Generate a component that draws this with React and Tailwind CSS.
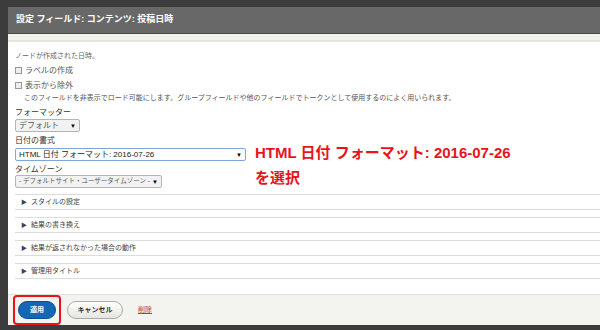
const jp = "font-['Liberation_Sans','Noto_Sans_CJK_JP',sans-serif]";

const sections = ["スタイルの設定", "結果の書き換え", "結果が返されなかった場合の動作", "管理用タイトル"];

function Select({ label, width, size = "text-[8px]", highlight }) {
  return (
    <div
      className={`flex h-[13px] items-center justify-between whitespace-nowrap rounded-[2px] border px-[3px] ${size} ${width} ${
        highlight ? "border-[#7fa6d9] bg-white text-[#222]" : "border-[#b5b5b5] bg-[#f2f2f2] text-[#555]"
      }`}
    >
      <span className="leading-none">{label}</span>
      <span className="text-[6px] leading-none text-black">▼</span>
    </div>
  );
}

function Checkbox({ label }) {
  return (
    <div className="flex items-center gap-[3px] text-[8px] leading-[11px] text-[#555]">
      <span className="h-[7px] w-[7px] border border-[#999] bg-[#eee]" />
      <span>{label}</span>
    </div>
  );
}

export default function App() {
  return (
    <div className={`h-[330px] w-[600px] overflow-hidden bg-[#3c3c3c] pl-[8px] pt-[7px] ${jp}`}>
      <div className="flex h-[318px] w-[600px] flex-col bg-white">
        <div className="flex h-[27px] items-center border-b border-[#4a4a4a] bg-[#686868] pl-[8px] text-[9px] font-bold text-white">
          設定 フィールド: コンテンツ: 投稿日時
        </div>
        <div className="h-[8px] border-b-2 border-[#e6e6e0] bg-[#f2f2ec]" />
        <div className="flex flex-1 flex-col pl-[7px]">
          <div className="mt-[8px] text-[7px] leading-[11px] text-[#666]">ノードが作成された日時。</div>
          <div className="mt-[4px]">
            <Checkbox label="ラベルの作成" />
          </div>
          <div className="mt-[4px]">
            <Checkbox label="表示から除外" />
          </div>
          <div className="mt-[1px] pl-[9px] text-[7px] leading-[11px] text-[#555]">
            このフィールドを非表示でロード可能にします。グループフィールドや他のフィールドでトークンとして使用するのによく用いられます。
          </div>
          <div className="mt-[4px] text-[8px] leading-[11px] text-[#333]">フォーマッター</div>
          <div className="mt-[1px]">
            <Select label="デフォルト" width="w-[65px]" />
          </div>
          <div className="mt-[3px] text-[8px] leading-[11px] text-[#333]">日付の書式</div>
          <div className="relative mt-[2px]">
            <Select label="HTML 日付 フォーマット: 2016-07-26" width="w-[231px]" highlight />
            <div className="absolute left-[240px] top-[-8px] whitespace-nowrap text-[15px] font-bold leading-[25px] text-[#e8141c]">
              HTML 日付 フォーマット: 2016-07-26
              <br />
              を選択
            </div>
          </div>
          <div className="mt-[3px] text-[8px] leading-[11px] text-[#333]">タイムゾーン</div>
          <div>
            <Select label="- デフォルトサイト・ユーザータイムゾーン -" width="w-[147px]" size="text-[6.5px]" />
          </div>
          <div className="mt-[6px] flex flex-col gap-[7px]">
            {sections.map((s) => (
              <div
                key={s}
                className="flex h-[16px] items-center gap-[4px] border-y border-[#dcdcdc] pl-[6px] text-[7px] text-[#444]"
              >
                <span className="text-[6px]">▶</span>
                <span>{s}</span>
              </div>
            ))}
          </div>
        </div>
        <div className="flex h-[31px] items-center gap-[6px] border-t border-[#e0e0da] bg-[#f3f3ef] pl-[5px]">
          <div className="flex h-[30px] w-[48px] items-center justify-center rounded-[4px] border-2 border-[#e8141c]">
            <div className="flex h-[18px] w-[38px] items-center justify-center rounded-full border border-[#0a4f8f] bg-[#1467b5] text-[7px] font-bold text-white">
              適用
            </div>
          </div>
          <div className="flex h-[18px] w-[56px] items-center justify-center rounded-full border border-[#aaa] bg-gradient-to-b from-white to-[#e4e4e0] text-[7px] font-bold text-[#333]">
            キャンセル
          </div>
          <span className="ml-[9px] text-[7px] text-[#c0392b] underline">削除</span>
        </div>
      </div>
    </div>
  );
}
